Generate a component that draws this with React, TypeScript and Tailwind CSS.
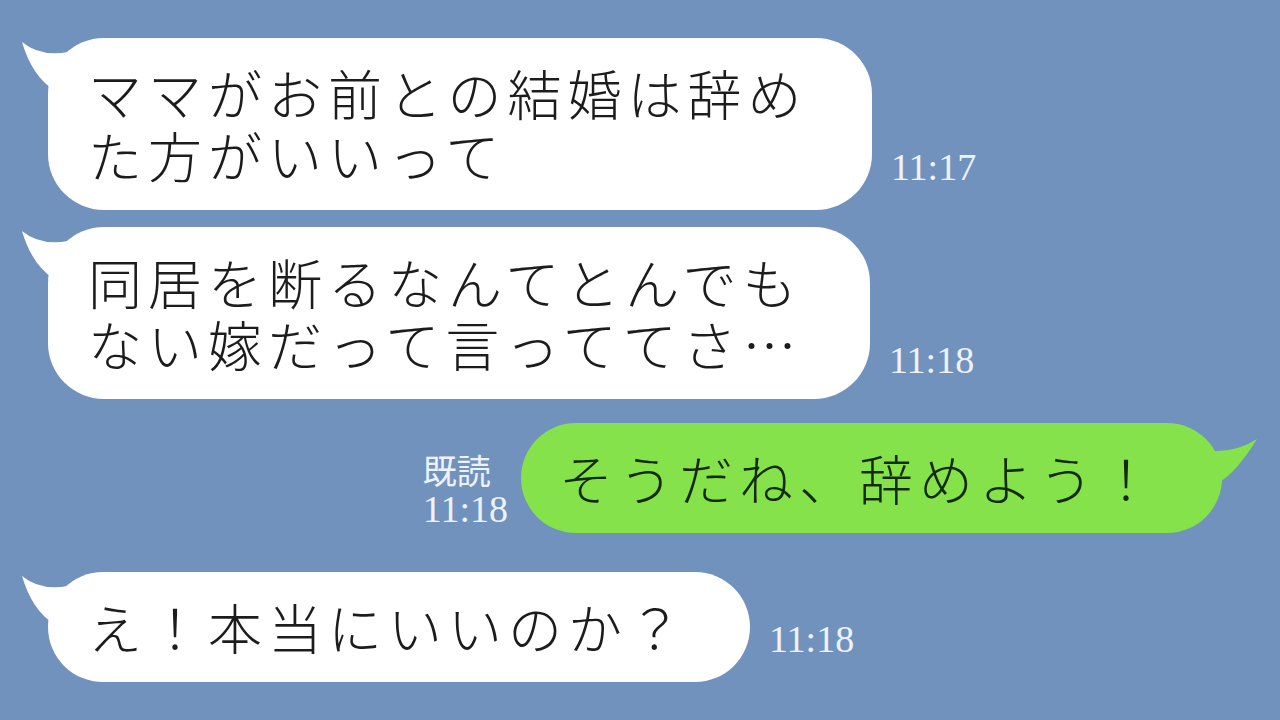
import React from 'react'

const jp = { fontFamily: '"Noto Sans CJK JP", "Noto Sans", sans-serif' }
const serif = { fontFamily: '"Liberation Serif", "DejaVu Serif", serif' }

function LeftTail() {
  return (
    <svg
      className="absolute left-[-30px] top-0 overflow-visible"
      width="80"
      height="60"
      viewBox="-30 0 80 60"
    >
      <path d="M -26 4 Q -8 19 20 14 L 40 18 L 6 52 Q -16 38 -26 4 Z" fill="#ffffff" />
    </svg>
  )
}

function RightTail() {
  return (
    <svg
      className="absolute right-[-40px] top-0 overflow-visible"
      width="80"
      height="70"
      viewBox="-40 0 80 70"
    >
      <path d="M 35 16 Q 14 30 -14 28 L -30 34 L -4 60 Q 14 50 35 16 Z" fill="#86e24a" />
    </svg>
  )
}

function Time({ children, className = '' }: { children: React.ReactNode; className?: string }) {
  return (
    <div style={serif} className={`text-[38px] leading-none text-[#eef3fb] whitespace-nowrap ${className}`}>
      {children}
    </div>
  )
}

function Incoming({
  lines,
  width,
  time,
  timeMb,
}: {
  lines: string[]
  width: string
  time: string
  timeMb: string
}) {
  return (
    <div className="flex items-end pl-[48px]">
      <div className={`relative rounded-[56px] bg-white py-6 pl-[40px] ${width}`}>
        <LeftTail />
        <div
          style={jp}
          className="relative whitespace-nowrap text-[54px] font-light leading-[62px] tracking-[6px] text-[#1c1c1c]"
        >
          {lines.map((l, i) => (
            <div key={i}>{l}</div>
          ))}
        </div>
      </div>
      <Time className={`ml-[19px] ${timeMb}`}>{time}</Time>
    </div>
  )
}

export default function App() {
  return (
    <div className="flex h-[720px] w-full flex-col overflow-hidden bg-[#7292be] pt-[38px]">
      <Incoming
        lines={['ママがお前との結婚は辞め', 'た方がいいって']}
        width="w-[824px]"
        time="11:17"
        timeMb="mb-[24px]"
      />

      <div className="mt-[17px]">
        <Incoming
          lines={['同居を断るなんてとんでも', 'ない嫁だって言っててさ…']}
          width="w-[822px]"
          time="11:18"
          timeMb="mb-[20px]"
        />
      </div>

      <div className="mt-[24px] flex items-end justify-end pr-[58px]">
        <div className="mb-[5px] mr-[13px] flex flex-col items-start">
          <div style={jp} className="text-[34px] leading-[40px] text-[#eef3fb]">
            既読
          </div>
          <Time>11:18</Time>
        </div>
        <div className="relative w-[701px] rounded-[56px] bg-[#86e24a] py-6 pl-[38px]">
          <RightTail />
          <div
            style={jp}
            className="relative whitespace-nowrap text-[54px] font-light leading-[62px] tracking-[6px] text-[#142a0a]"
          >
            そうだね、辞めよう！
          </div>
        </div>
      </div>

      <div className="mt-[39px]">
        <Incoming lines={['え！本当にいいのか？']} width="w-[702px]" time="11:18" timeMb="mb-[24px]" />
      </div>
    </div>
  )
}
